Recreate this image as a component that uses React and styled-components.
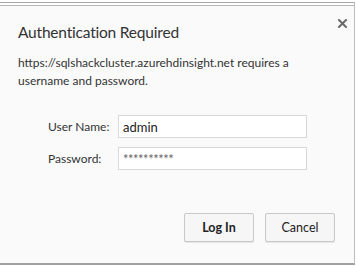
import React from 'react'
import styled, { createGlobalStyle } from 'styled-components'

const Global = createGlobalStyle`
  html, body {
    margin: 0;
    padding: 0;
    background: #ffffff;
  }
  body {
    font-family: Lato, "Noto Sans", sans-serif;
  }
`;

const Page = styled.div`
  width: 357px;
  height: 266px;
  padding-top: 2px;
  box-sizing: border-box;
`;

const Dialog = styled.div`
  position: relative;
  width: 355px;
  height: 263px;
  box-sizing: border-box;
  background: #fafafa;
  border-top: 1px solid #a8a8a8;
  border-right: 1px solid #bdbdbd;
  border-bottom: 2px solid #a0a0a0;
  box-shadow: inset 0 2px 0 #ffffff, inset 0 3px 0 #b8b8b8;
  padding: 18px 18px 0 18px;
  display: flex;
  flex-direction: column;
`;

const Close = styled.button`
  position: absolute;
  top: 13px;
  right: 5px;
  width: 14px;
  height: 14px;
  padding: 0;
  border: none;
  background: none;
  display: flex;
  align-items: center;
  justify-content: center;
`;

const Title = styled.div`
  font-size: 15.5px;
  letter-spacing: -0.2px;
  color: #333333;
  line-height: 22px;
`;

const Message = styled.div`
  margin-top: 11px;
  font-size: 12px;
  line-height: 18px;
  color: #333333;
  width: 300px;
`;

const Fields = styled.div`
  margin-top: 25px;
  margin-left: 30px;
  display: grid;
  grid-template-columns: 70px 189px;
  row-gap: 9px;
  align-items: center;
`;

const Label = styled.label`
  font-size: 12px;
  color: #333333;
`;

const Input = styled.div`
  height: 23px;
  box-sizing: border-box;
  border: 1px solid #d8d8d8;
  background: #ffffff;
  padding: 0 4px;
  display: flex;
  align-items: center;
  font-size: 13px;
  color: ${({ masked }) => (masked ? '#666666' : '#222222')};
  letter-spacing: ${({ masked }) => (masked ? '-0.5px' : '0')};
`;

const Actions = styled.div`
  margin-top: 43px;
  margin-right: 1px;
  display: flex;
  justify-content: flex-end;
  gap: 11px;
`;

const Button = styled.button`
  width: 70px;
  height: 29px;
  box-sizing: border-box;
  border: 1px solid #c8c8c8;
  border-radius: 2px;
  background: #f6f6f6;
  box-shadow: 0 1px 0 rgba(0, 0, 0, 0.08);
  font-family: Lato, "Noto Sans", sans-serif;
  font-size: 12.5px;
  font-weight: ${({ primary }) => (primary ? 700 : 400)};
  color: #222222;
  padding: 0;
`;

export default function App() {
  return (
    <Page>
      <Global />
      <Dialog>
        <Close aria-label="Close">
          <svg width="9" height="9" viewBox="0 0 9 9">
            <path d="M1 1 L8 8 M8 1 L1 8" stroke="#6b6b6b" strokeWidth="2" strokeLinecap="square" />
          </svg>
        </Close>
        <Title>Authentication Required</Title>
        <Message>
          https://sqlshackcluster.azurehdinsight.net requires a username and password.
        </Message>
        <Fields>
          <Label>User Name:</Label>
          <Input>admin</Input>
          <Label>Password:</Label>
          <Input masked>**********</Input>
        </Fields>
        <Actions>
          <Button primary>Log In</Button>
          <Button>Cancel</Button>
        </Actions>
      </Dialog>
    </Page>
  )
}
